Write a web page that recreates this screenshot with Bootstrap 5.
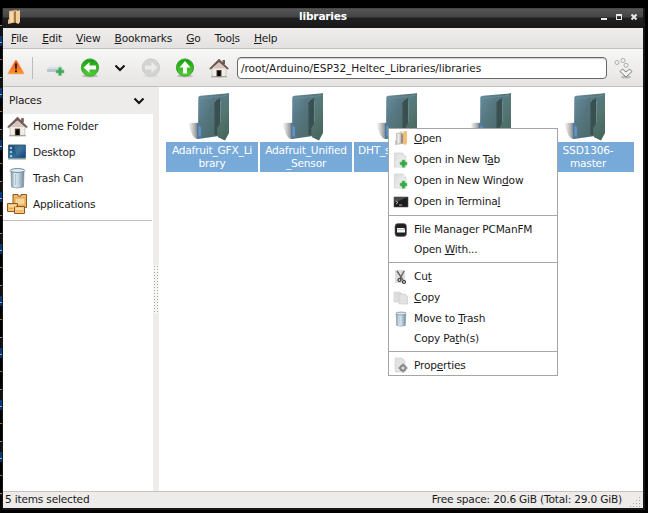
<!DOCTYPE html>
<html lang="en">
<head>
<meta charset="utf-8">
<title>libraries</title>
<link href="https://cdn.jsdelivr.net/npm/bootstrap@5.3.0/dist/css/bootstrap.min.css" rel="stylesheet">
<style>
html,body{height:513px;overflow:hidden}
body{background:#000;font-family:"DejaVu Sans",sans-serif;font-size:10.6px;letter-spacing:-.2px;line-height:13px;color:#1a1a1a;width:648px;padding:8px 3px 2px 2px;position:relative}
svg{display:block;flex:none;overflow:visible}
u{text-underline-offset:1px;text-decoration-thickness:1px}
.behind{left:0;top:16px;width:2px;height:480px;background:repeating-linear-gradient(#000 0 9px,#888 9px 10px,#111 10px 20px,#053a7c 20px 26px,#9ab 26px 27px,#06326c 27px 30px,#000 30px 43px,#b06a20 43px 44px,#000 44px 52px)}
.win{height:502px;background:#171717;padding:0 2px 2px 1px}
.titlebar{height:20px;background:linear-gradient(#3a3a3a 0,#555 1px,#454545 9px,#202020 10px,#181818 20px);color:#fff;font-weight:bold;position:relative}
.titlebar .ttl{padding-top:2px}
.titlebar .app{left:4px;top:1px}
.titlebar .ctl{right:5px;top:5px}
.menus{height:21px;padding:4px 8px 0;gap:14.2px;background:linear-gradient(#eeedec,#e3e2e0);border-bottom:1px solid #c3bfbd}
.tools{height:38px;background:linear-gradient(#f7f7f6,#e6e4e2);border-bottom:1px solid #c4bfbc;padding:0 8px 0 4px}
.tools .vr{align-self:center;height:22px;min-height:0;width:1px;background:#bdbbb8;opacity:1;margin:0 13px 0 7px}
.gap-a{margin-left:14px}.gap-b{margin-left:15px}.gap-c{margin-left:7px}
.addr{height:22px;width:370px;border:1px solid #696969;border-radius:4px;background:#fff;padding:3px 3px;margin-left:8px;letter-spacing:-.06px;line-height:14px;box-shadow:inset 0 1px 1px #ccc}
.side{width:150px;background:#fff}
.side-head{height:27px;background:#edeceb;padding:0 8px 0 6px}
.place{height:26px;padding-left:4px;gap:5px}
.places{border-bottom:1px solid #bdbdbd;height:107px;width:149px}
.places .place:first-child{height:25px}
.split{width:6px;background:#edeceb}
.grip{width:6px;height:48px;background:radial-gradient(circle at 1.5px 1.5px,#aaa 0 .8px,#f6f6f5 1px) 0 0/3px 3px}
.files{padding:6px 0 0 7px;gap:2px;background:#fff}
.file{width:92px}
.file .name{height:30px;background:#77a9d9;color:#fff;line-height:13px;padding-top:2px;white-space:pre}
.status{height:17px;background:#edeceb;border-top:1px solid #c9c1c0;padding:1px 2px 0 2px}
.status .corner{margin-left:7px;margin-top:3px}
.ctx{left:388px;top:128px;width:170px;height:248px;background:#fff;border:1px solid #a5a5a5;z-index:5}
.ctx .it{height:21px;padding-left:4px;gap:5px}
.ctx .it.end{height:20px}
.ctx .it.first{height:20px;padding-bottom:2px}
.ctx .it.short{height:19px;padding-left:25px}
.ctx .line{height:7px;padding-top:3px}
.ctx .line::before{content:"";display:block;height:1px;background:#a8a8a8}
</style>
<script src="https://cdn.jsdelivr.net/npm/bootstrap@5.3.0/dist/js/bootstrap.bundle.min.js"></script>
</head>
<body>
<svg width="0" height="0" class="position-absolute">
<defs>
<linearGradient id="gGreen" x2="0" y2="1"><stop stop-color="#199c13"/><stop offset="1" stop-color="#55cf38"/></linearGradient>
<linearGradient id="gFold" x2="0.3" y2="1"><stop stop-color="#557f8b"/><stop offset=".5" stop-color="#557672"/><stop offset="1" stop-color="#48685f"/></linearGradient>
<linearGradient id="gFoldB" x2="1" y2=".8"><stop stop-color="#668f9f"/><stop offset=".4" stop-color="#567680"/><stop offset="1" stop-color="#48655d"/></linearGradient>
<linearGradient id="gShade" x2="1" y2="0"><stop stop-color="#777" stop-opacity="0"/><stop offset="1" stop-color="#555" stop-opacity=".75"/></linearGradient>
<linearGradient id="gTan" x2="1" y2="0"><stop stop-color="#e7c28c"/><stop offset=".5" stop-color="#fff0d8"/><stop offset="1" stop-color="#d79f52"/></linearGradient>
<linearGradient id="gCan" x2="1" y2="0"><stop stop-color="#7c909e"/><stop offset=".3" stop-color="#e1edf4"/><stop offset=".65" stop-color="#b9cedb"/><stop offset="1" stop-color="#6d8495"/></linearGradient>
<linearGradient id="gDesk" x2="1" y2="1"><stop stop-color="#14395e"/><stop offset=".6" stop-color="#2d6c9c"/><stop offset="1" stop-color="#163e68"/></linearGradient>
<linearGradient id="gWarn" x2="0" y2="1"><stop stop-color="#e44a10"/><stop offset="1" stop-color="#ff982e"/></linearGradient>
<linearGradient id="gDoc" x2="1" y2="1"><stop stop-color="#dcdcdc"/><stop offset="1" stop-color="#f5f5f5"/></linearGradient>
<symbol id="folder" viewBox="0 0 46 50"><path d="M-1 31Q3 29 9 30V46Q5 46 3 41Z" fill="url(#gShade)"/><path d="M9.300 4.500Q9.500 3 11.500 2.700L40 .300V40L30 43 9 46Z" fill="url(#gFoldB)"/><path d="M25.500 9Q27 6 31 5V31L28.500 35V42L25.500 42Z" fill="#3a5050"/><path d="M7.800 31Q8 29 10 29.500L12 34 13 44.500 8 46Z" fill="#53789a"/><path d="M9.500 32 11.800 34.500V43L9.500 43.500Z" fill="#5f96c4"/><path d="M31 6Q31.500 3 34 2L40 .300V40L36 47.500 29.500 44.500Q28.300 43.500 28.500 35Q31 33 31 29Z" fill="url(#gFold)"/><path d="M11 5.500 38 2.500M25.500 9Q26.500 6 30 5M31.500 8V29" stroke="#7499a5" stroke-width=".7" fill="none" opacity=".8"/></symbol>
<symbol id="home" viewBox="0 0 20 20"><path d="M3 10 10 3 17 10V18Q10 20 3 18Z" fill="#f2ede7" stroke="#b9b2aa" stroke-width=".6"/><path d="M13.500 2H16V6H13.500Z" fill="#765a57"/><path d="M10 1 .5 10.500 1.500 11.300 10 4 18.500 11.300 19.500 10.500Z" fill="#715955" stroke="#443635" stroke-width=".4"/><path d="M10 4.500 3.500 10.500H16.500Z" fill="#d9c4bc"/><rect x="7.500" y="12" width="5" height="7" fill="#4a4034"/><rect x="8.500" y="13" width="3" height="5" fill="#050505"/><path d="M2 18.800H18" stroke="#9c968f"/></symbol>
<symbol id="pagenew" viewBox="0 0 16 16"><path d="M1.500 1H10L13 4V15H1.500Z" fill="url(#gDoc)" stroke="#cfcfcf" stroke-width=".7"/><path d="M10 1V4H13" fill="#fff" stroke="#ccc" stroke-width=".6"/><path d="M9 8H12V10H14V13H12V15.300H9V13H7V10H9Z" fill="#35a744" stroke="#78c77e" stroke-width=".6"/></symbol>
<symbol id="trash" viewBox="0 0 18 22"><path d="M2.500 4H15.500L15 20Q9 22 3 20Z" fill="url(#gCan)" stroke="#7d93a2" stroke-width=".7"/><ellipse cx="9" cy="3.500" rx="7.200" ry="2" fill="#dce9f0" stroke="#748a99"/><path d="M7 7V18M11.500 7V18" stroke="#a1b6c3" stroke-width=".7"/></symbol>
<symbol id="smallfolder" viewBox="0 0 14 16"><path d="M6 1.500 12 1V13L6 14Z" fill="url(#gTan)"/><path d="M2 3 8 2V14L1 15V11L2 10Z" fill="#c9c3bd"/><path d="M3.500 4 5.500 3.500V13L3.500 13.500Z" fill="#efefef"/><path d="M7 4 9.500 3V13L7 14Z" fill="#9b8e80"/><path d="M9.500 2.500 13 1V13L11.500 15 9 14Z" fill="#f0bf79"/></symbol>
<symbol id="chev" viewBox="0 0 12 8"><path d="M1.500 1.500 6 6 10.500 1.500" fill="none" stroke="#111" stroke-width="2"/></symbol>
</defs>
</svg>
<div class="behind position-absolute"></div>
<div class="win d-flex flex-column">
  <header class="titlebar text-center flex-shrink-0"><div class="ttl">libraries</div>
    <svg class="app position-absolute" width="14" height="16" viewBox="0 0 14 16"><path d="M2 2 10 1V13L1 15V11L2 10Z" fill="#e5bd84"/><path d="M3 3 6 2.500V13L3 14Z" fill="#f6d9ab"/><path d="M7 3 9 2V13L7 13.500Z" fill="#a77a48"/><path d="M9 2.500 13 1V13L11.500 15 9 14Z" fill="#f1cf9c"/></svg>
    <svg class="ctl position-absolute" width="37" height="8" viewBox="0 0 37 8"><path d="M0 5H6V7H0Z" fill="#e9e9e9"/><path d="M15 1H21V7H15ZM16 3V6H20V3Z" fill="#e9e9e9" fill-rule="evenodd"/><path d="M30.500 1.500 35.500 6.500M35.500 1.500 30.500 6.500" stroke="#e9e9e9" stroke-width="2"/></svg>
  </header>
  <nav class="menus d-flex flex-shrink-0">
    <span><u>F</u>ile</span><span><u>E</u>dit</span><span><u>V</u>iew</span><span><u>B</u>ookmarks</span><span><u>G</u>o</span><span>Too<u>l</u>s</span><span><u>H</u>elp</span>
  </nav>
  <div class="tools d-flex align-items-center flex-shrink-0">
    <svg width="18" height="17" viewBox="0 0 18 17"><path d="M9 1Q9.600 1 10 2L17 14Q17 15 16 15H2Q1 15 1 14L8 2Q8.400 1 9 1Z" fill="url(#gWarn)" stroke="#f8ad78" stroke-width=".7"/><path d="M8 4.500H10L9.700 10.500H8.300ZM8 11.500H10V13.300H8Z" fill="#26160d"/></svg>
    <div class="vr"></div>
    <svg width="20" height="18" viewBox="0 0 20 18"><path d="M1 10 5 6H14L18 10V13H1Z" fill="#d9e0e5"/><path d="M1 10H15V13H1Z" fill="#b9c5d1"/><path d="M5 6H13L14 8H4Z" fill="#e8ecee"/><path d="M12.500 8.500H15.500V11H18V14H15.500V16.500H12.500V14H10V11H12.500Z" fill="#3fa957" stroke="#86c694" stroke-width=".6"/></svg>
    <svg class="gap-a" width="20" height="20" viewBox="0 0 20 20"><ellipse cx="10" cy="18" rx="8" ry="1.500" fill="#bbb"/><circle cx="10" cy="9.500" r="8.600" fill="url(#gGreen)" stroke="#37a52d"/><path d="M3.500 9.500 9.500 4V7.500H16V11.500H9.500V15Z" fill="#f7fff4"/></svg>
    <svg class="gap-a" width="12" height="8"><use href="#chev"/></svg>
    <svg class="gap-b" width="20" height="20" viewBox="0 0 20 20"><ellipse cx="10" cy="18" rx="8" ry="1.500" fill="#ddd"/><circle cx="10" cy="9.500" r="8.600" fill="#d3d3d1" stroke="#cacac8"/><path d="M16.500 9.500 10.500 4V7.500H4V11.500H10.500V15Z" fill="#ebebe9"/></svg>
    <svg class="gap-a" width="20" height="20" viewBox="0 0 20 20"><ellipse cx="10" cy="18" rx="8" ry="1.500" fill="#bbb"/><circle cx="10" cy="9.500" r="8.600" fill="url(#gGreen)" stroke="#37a52d"/><path d="M10 3 15.500 9.500H12V15.500H8V9.500H4.500Z" fill="#f7fff4"/></svg>
    <svg class="gap-a" width="20" height="20"><use href="#home"/></svg>
    <div class="addr">/root/Arduino/ESP32_Heltec_Libraries/libraries</div>
    <svg class="gap-c" width="20" height="22" viewBox="0 0 20 22"><g fill="#f4f4f3" stroke="#a4a4a2" stroke-width=".9"><circle cx="3" cy="5.500" r="2"/><circle cx="9" cy="3.500" r="2"/><circle cx="12" cy="8.300" r="2"/></g><ellipse cx="12" cy="20" rx="5" ry="1.500" fill="#bbb"/><path d="M6 14.500 8.500 12 12 15 15.500 12 18 14.500 12 20Z" fill="#f2f2f2" stroke="#808080"/></svg>
  </div>
  <main class="d-flex flex-fill">
    <aside class="side">
      <div class="side-head d-flex align-items-center justify-content-between"><span>Places</span><svg width="12" height="8"><use href="#chev"/></svg></div>
      <div class="places">
        <div class="place d-flex align-items-center"><svg width="21" height="21"><use href="#home"/></svg><span>Home Folder</span></div>
        <div class="place d-flex align-items-center"><svg width="21" height="20" viewBox="0 0 21 20"><path d="M1 3H19V18H1Z" fill="#c6cdcd"/><path d="M1.500 3H18.500V16H1.500Z" fill="url(#gDesk)" stroke="#426a83"/><path d="M7 4 17 4 10 14Z" fill="#527f9c" opacity=".5"/><path d="M3 5H5V7H3ZM3 9H5V11H3ZM3 13H5V15H3Z" fill="#bad9e5" stroke="#77a5bf" stroke-width=".5"/></svg><span>Desktop</span></div>
        <div class="place d-flex align-items-center"><svg width="21" height="22"><use href="#trash"/></svg><span>Trash Can</span></div>
        <div class="place d-flex align-items-center"><svg width="21" height="22" viewBox="0 0 21 22"><g stroke="#925a18"><path d="M6 1.500H11V3H14V1.500H19.500V14.500H6Z" fill="#eeb96a"/><path d="M8 5H18V12H8Z" fill="#f7d49c" stroke="#dfa34e"/><path d="M.500 10.500H10.500V18.500H.500Z" fill="#f1c07a"/><path d="M7.500 13.500H17.500V20.500H7.500Z" fill="#f5c987"/></g><path d="M2 13H9M9 16H16" stroke="#fff0cf"/><path d="M2 15.500H6M9 18H16" stroke="#e8a951"/></svg><span>Applications</span></div>
      </div>
    </aside>
    <div class="split d-flex align-items-center"><div class="grip"></div></div>
    <section class="files d-flex align-items-start flex-fill">
      <div class="file text-center"><svg class="mx-auto" width="46" height="49"><use href="#folder" width="46" height="50"/></svg><div class="name">Adafruit_GFX_Li
brary</div></div>
      <div class="file text-center"><svg class="mx-auto" width="46" height="49"><use href="#folder" width="46" height="50"/></svg><div class="name">Adafruit_Unified
_Sensor</div></div>
      <div class="file text-center"><svg class="mx-auto" width="46" height="49"><use href="#folder" width="46" height="50"/></svg><div class="name text-start ps-1">DHT_s</div></div>
      <div class="file text-center"><svg class="mx-auto" width="46" height="49"><use href="#folder" width="46" height="50"/></svg><div class="name"></div></div>
      <div class="file text-center"><svg class="mx-auto" width="46" height="49"><use href="#folder" width="46" height="50"/></svg><div class="name">SSD1306-
master</div></div>
    </section>
  </main>
  <footer class="status d-flex justify-content-between flex-shrink-0"><span>5 items selected</span><div class="d-flex"><span>Free space: 20.6 GiB (Total: 29.0 GiB)</span>
    <svg class="corner" width="12" height="12" viewBox="0 0 12 12"><path d="M10 1h1v1h-1zM7 4h1v1h-1zM10 4h1v1h-1zM4 7h1v1h-1zM7 7h1v1h-1zM10 7h1v1h-1zM1 10h1v1h-1zM4 10h1v1h-1zM7 10h1v1h-1zM10 10h1v1h-1z" fill="#aaa"/></svg></div></footer>
</div>
<div class="ctx position-absolute">
  <div class="it first d-flex align-items-center"><svg width="16" height="16"><use href="#smallfolder"/></svg><span><u>O</u>pen</span></div>
  <div class="it d-flex align-items-center"><svg width="16" height="16"><use href="#pagenew"/></svg><span>Open in New T<u>a</u>b</span></div>
  <div class="it d-flex align-items-center"><svg width="16" height="16"><use href="#pagenew"/></svg><span>Open in New Win<u>d</u>ow</span></div>
  <div class="it d-flex align-items-center"><svg width="16" height="16" viewBox="0 0 16 16"><path d="M1 3H15V13H1Z" fill="#1d1d1d" stroke="#555" stroke-width=".6"/><path d="M1 3H15L1 9Z" fill="#4a4a4a"/><path d="M3 7 5 8.500 3 10M6 11H9" stroke="#ddd" stroke-width=".8" fill="none"/></svg><span>Open in Termina<u>l</u></span></div>
  <div class="line"></div>
  <div class="it d-flex align-items-center"><svg width="16" height="16" viewBox="0 0 16 16"><rect x="2" y="1.500" width="11.500" height="13" rx="3" fill="#222" stroke="#666" stroke-width=".6"/><path d="M4 6H11L12 7V10.500H4Z" fill="#f5f5f5"/><path d="M4 7.500H12" stroke="#aaa" stroke-width=".7"/></svg><span>File Manager PCManFM</span></div>
  <div class="it short d-flex align-items-center"><span>Open <u>W</u>ith...</span></div>
  <div class="line"></div>
  <div class="it d-flex align-items-center"><svg width="16" height="16" viewBox="0 0 16 16"><path d="M2 1H12V14H2Z" fill="#dedede"/><path d="M4 2 10 11M11 2 7 10" stroke="#666" stroke-width="1.400"/><circle cx="6.500" cy="11" r="1.500" fill="none" stroke="#333" stroke-width="1.200"/><circle cx="11" cy="13" r="1.500" fill="none" stroke="#333" stroke-width="1.200"/></svg><span>Cu<u>t</u></span></div>
  <div class="it d-flex align-items-center"><svg width="16" height="16" viewBox="0 0 16 16"><path d="M1 2H7L9 4V12H1Z" fill="#dedede" stroke="#ccc" stroke-width=".6"/><path d="M6 4H12L14.500 6.500V14H6Z" fill="#e2e2e2" stroke="#c6c6c6" stroke-width=".6"/></svg><span><u>C</u>opy</span></div>
  <div class="it d-flex align-items-center"><svg width="16" height="16"><use href="#trash"/></svg><span>Move to <u>T</u>rash</span></div>
  <div class="it short d-flex align-items-center"><span>Copy Pa<u>t</u>h(s)</span></div>
  <div class="line"></div>
  <div class="it end d-flex align-items-center"><svg width="16" height="16" viewBox="0 0 16 16"><path d="M2 1H9L12 4V15H2Z" fill="#e2e2e2" stroke="#d0d0d0" stroke-width=".6"/><circle cx="10" cy="11" r="2.600" fill="#ddd" stroke="#888" stroke-width="2"/><path d="M10 6.500V8M5.500 11H7M13 11H14.500M10 14V15.500" stroke="#888" stroke-width="1.500"/></svg><span>Prop<u>e</u>rties</span></div>
</div>
</body>
</html>
